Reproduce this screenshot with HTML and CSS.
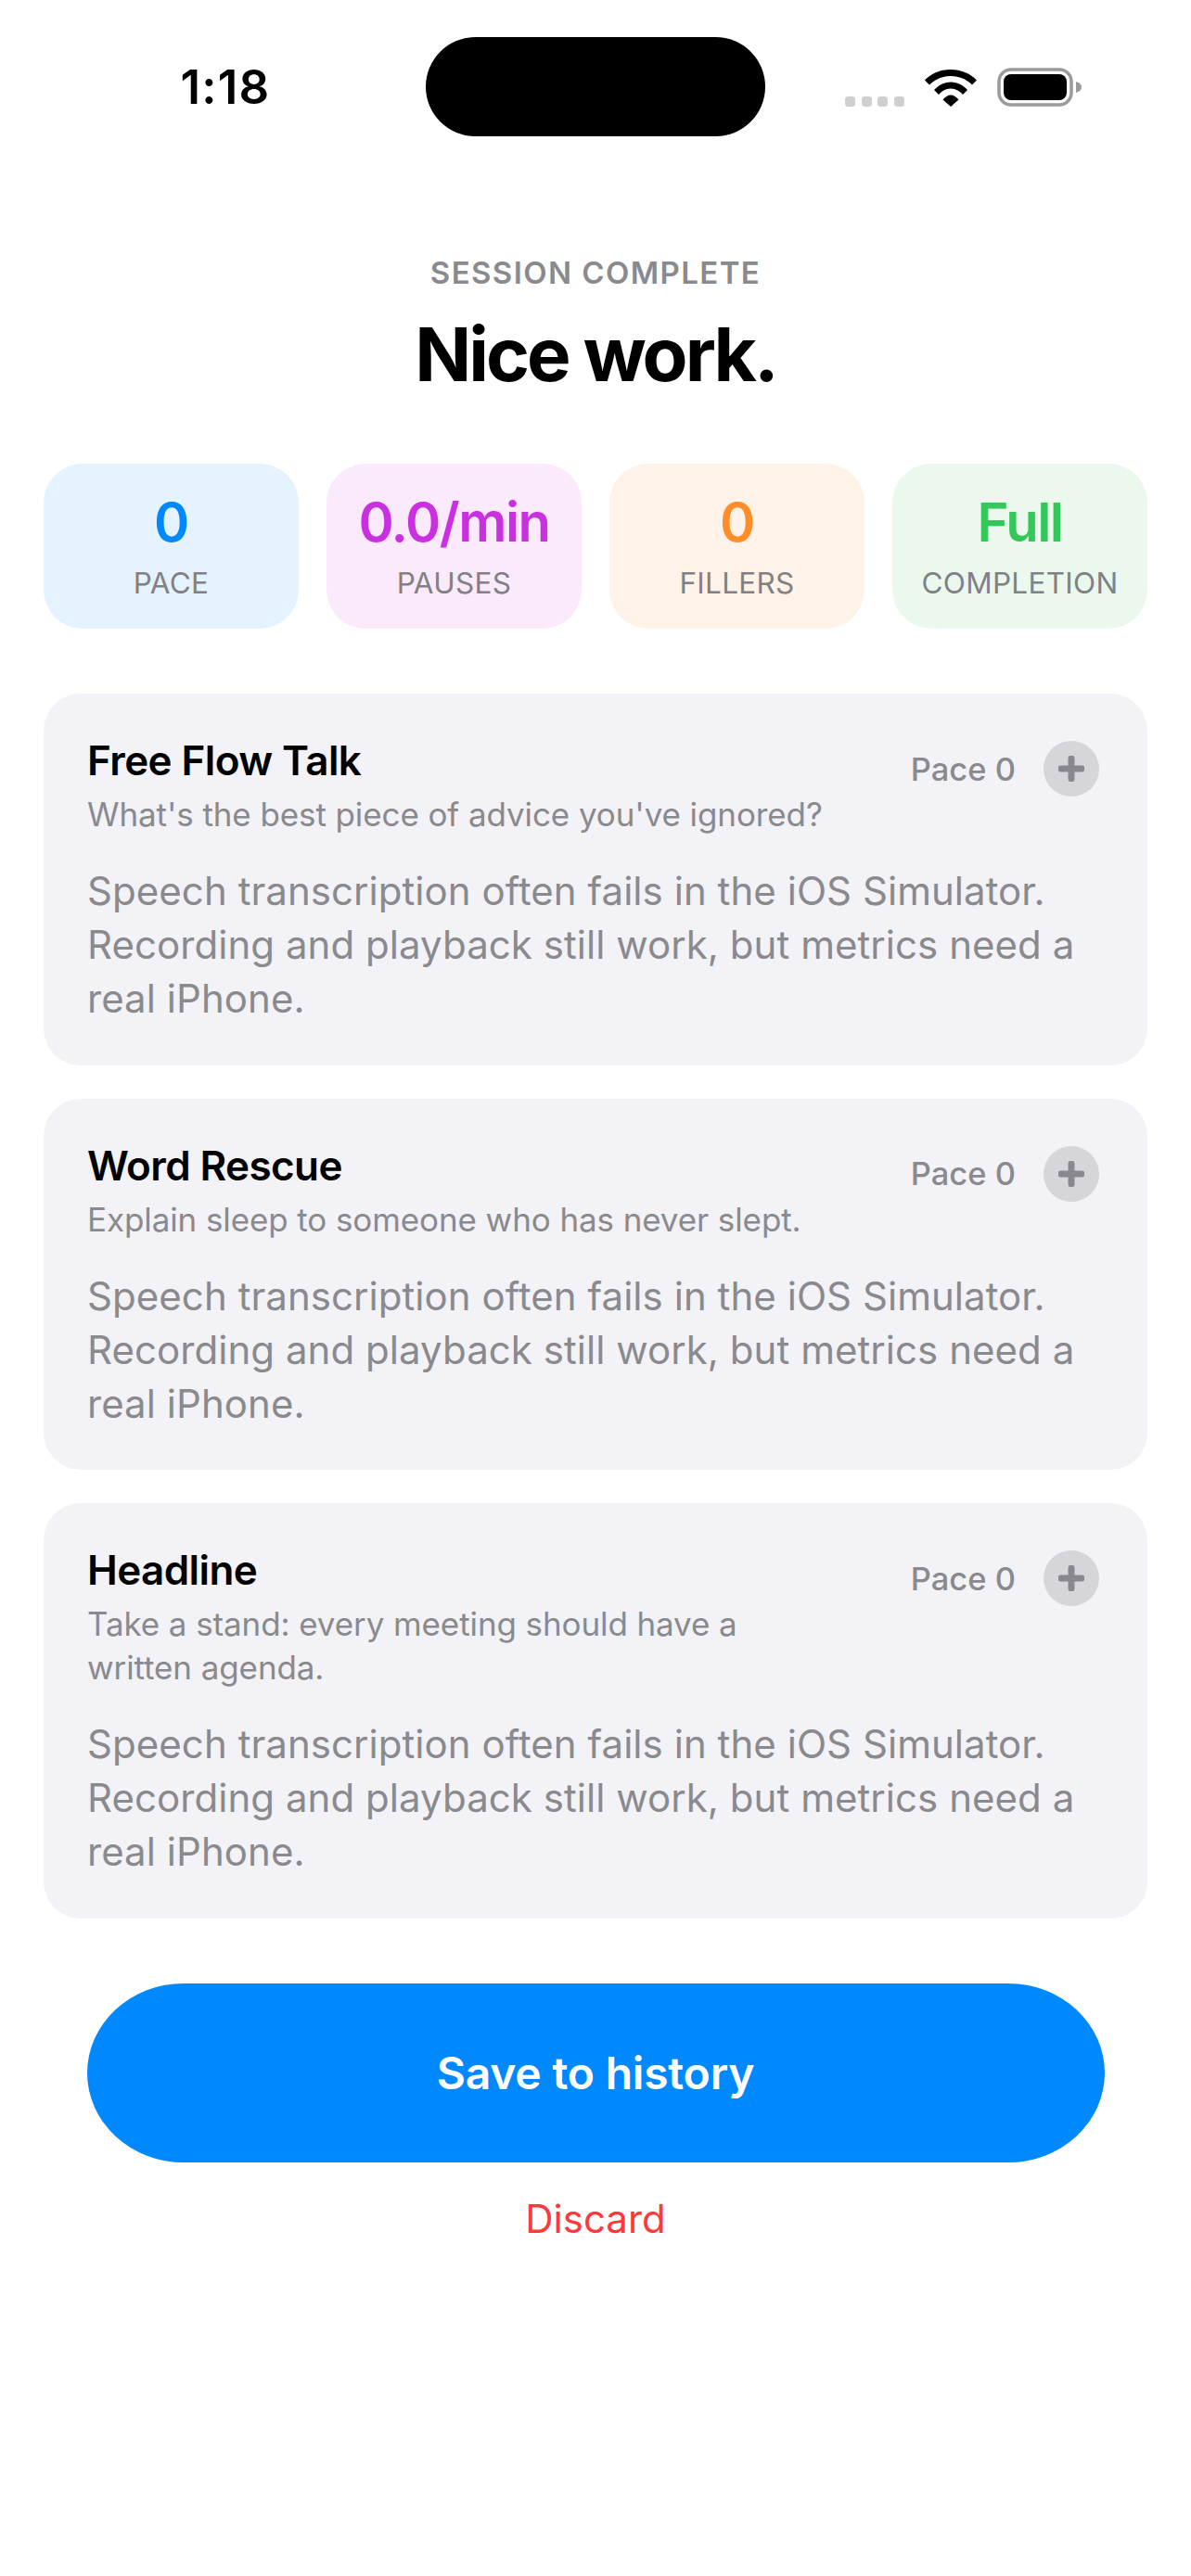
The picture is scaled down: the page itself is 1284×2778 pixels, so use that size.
FILE: index.html
```html
<!DOCTYPE html>
<html lang="en">
<head>
    <meta charset="UTF-8">
    <title>Session Complete</title>
    <link rel="stylesheet" href="styles.css">
</head>
<body>
    <div class="screen">
        <!-- Status bar -->
        <div class="status-bar">
            <div class="status-left"><span class="time">1:18</span></div>
            <div class="island"></div>
            <div class="status-right">
                <div class="signal-dots"><span></span><span></span><span></span><span></span></div>
                <svg class="wifi" width="56" height="41" viewBox="0 0 56 41">
                    <path d="M0 12.5C7.5 5 17 1 28 1S48.5 5 56 12.5L51 17.5C45 11.5 37 8 28 8S11 11.5 5 17.5Z"/>
                    <path d="M10 23C14 18.5 20.5 14.5 28 14.5S42 18.5 46 23L41 28C38 24.5 33.5 21.5 28 21.5S18 24.5 15 28Z"/>
                    <path d="M19.5 33.5C22 30.5 25 28.5 28 28.5S34 30.5 36.5 33.5L28 41Z"/>
                </svg>
                <svg class="battery" width="91" height="42" viewBox="0 0 91 42">
                    <rect x="2" y="2" width="78" height="38" rx="13" fill="none" stroke="#9b9b9b" stroke-width="3.5"/>
                    <rect x="7" y="7" width="68" height="28" rx="8"/>
                    <path d="M85 15C88.500 16 91 18 91 21S88.500 26 85 27Z" fill="#9b9b9b"/>
                </svg>
            </div>
        </div>

        <!-- Heading -->
        <div class="header">
            <div class="kicker">SESSION COMPLETE</div>
            <h1>Nice work.</h1>
        </div>

        <!-- Stat tiles -->
        <div class="stats">
            <div class="stat stat-blue">
                <div class="stat-value">0</div>
                <div class="stat-label">PACE</div>
            </div>
            <div class="stat stat-purple">
                <div class="stat-value">0.0/min</div>
                <div class="stat-label">PAUSES</div>
            </div>
            <div class="stat stat-orange">
                <div class="stat-value">0</div>
                <div class="stat-label">FILLERS</div>
            </div>
            <div class="stat stat-green">
                <div class="stat-value">Full</div>
                <div class="stat-label">COMPLETION</div>
            </div>
        </div>

        <!-- Drill results -->
        <div class="results">
            <div class="result">
                <div class="result-head">
                    <div class="result-titles">
                        <div class="result-title">Free Flow Talk</div>
                        <div class="result-prompt">What's the best piece of advice you've ignored?</div>
                    </div>
                    <div class="result-meta">
                        <span class="pace">Pace 0</span>
                        <span class="plus"><svg width="28" height="28" viewBox="0 0 28 28"><path d="M14 3V25M3 14H25"/></svg></span>
                    </div>
                </div>
                <p class="result-note">Speech transcription often fails in the iOS Simulator. Recording and playback still work, but metrics need a real iPhone.</p>
            </div>
            <div class="result">
                <div class="result-head">
                    <div class="result-titles">
                        <div class="result-title">Word Rescue</div>
                        <div class="result-prompt">Explain sleep to someone who has never slept.</div>
                    </div>
                    <div class="result-meta">
                        <span class="pace">Pace 0</span>
                        <span class="plus"><svg width="28" height="28" viewBox="0 0 28 28"><path d="M14 3V25M3 14H25"/></svg></span>
                    </div>
                </div>
                <p class="result-note">Speech transcription often fails in the iOS Simulator. Recording and playback still work, but metrics need a real iPhone.</p>
            </div>
            <div class="result">
                <div class="result-head">
                    <div class="result-titles">
                        <div class="result-title">Headline</div>
                        <div class="result-prompt">Take a stand: every meeting should have a written agenda.</div>
                    </div>
                    <div class="result-meta">
                        <span class="pace">Pace 0</span>
                        <span class="plus"><svg width="28" height="28" viewBox="0 0 28 28"><path d="M14 3V25M3 14H25"/></svg></span>
                    </div>
                </div>
                <p class="result-note">Speech transcription often fails in the iOS Simulator. Recording and playback still work, but metrics need a real iPhone.</p>
            </div>
        </div>

        <!-- Actions -->
        <button class="save">Save to history</button>
        <button class="discard">Discard</button>
    </div>
</body>
</html>
```

FILE: styles.css
```css
body {
    font-family: Inter, "Noto Sans", sans-serif;
    background-color: #fff;
    margin: 0;
    padding: 0;
    color: #000;
}
.screen {
    width: 1284px;
    height: 2778px;
    overflow: hidden;
}
.status-bar {
    display: flex;
    align-items: center;
    padding-top: 40px;
}
.status-left {
    width: 459px;
    padding-left: 27px;
    box-sizing: border-box;
    text-align: center;
}
.time {
    font-size: 51px;
    font-weight: 600;
    letter-spacing: 1.2px;
}
.island {
    width: 366px;
    height: 107px;
    background-color: #000;
    border-radius: 54px;
}
.status-right {
    display: flex;
    align-items: flex-end;
    gap: 22px;
    padding-left: 86px;
}
.signal-dots {
    display: flex;
    gap: 6.5px;
}
.signal-dots span {
    width: 11px;
    height: 11px;
    border-radius: 3.5px;
    background-color: #cfcfcf;
}
.wifi,
.battery {
    display: block;
}
.header {
    text-align: center;
    padding-top: 126px;
}
.kicker {
    font-size: 33px;
    line-height: 42px;
    font-weight: 600;
    letter-spacing: 1.4px;
    color: #8a8a8e;
}
h1 {
    font-size: 80px;
    line-height: 96px;
    font-weight: 700;
    letter-spacing: -3px;
    margin: 19px 0 0;
}
.stats {
    display: flex;
    gap: 30px;
    padding: 0 47px;
    margin-top: 70px;
}
.stat {
    flex: 1;
    height: 178px;
    border-radius: 42px;
    text-align: center;
    box-sizing: border-box;
    padding-top: 28px;
}
.stat-value {
    font-size: 58px;
    line-height: 70px;
    font-weight: 600;
    letter-spacing: -1.5px;
}
.stat-label {
    font-size: 31.5px;
    line-height: 40px;
    letter-spacing: 0.3px;
    margin-top: 11px;
    color: #808085;
}
.stat-blue { background-color: #e5f2ff; }
.stat-blue .stat-value { color: #0088ff; }
.stat-purple { background-color: #faeafc; }
.stat-purple .stat-value { color: #cb30e0; }
.stat-orange { background-color: #fff3e9; }
.stat-orange .stat-value { color: #ff8d28; }
.stat-green { background-color: #ebf8ee; }
.stat-green .stat-value { color: #34c759; }
.results {
    display: flex;
    flex-direction: column;
    gap: 36px;
    padding: 0 47px;
    margin-top: 70px;
}
.result {
    background-color: #f2f2f7;
    border-radius: 40px;
    padding: 45px 52px 42.67px 47px;
}
.result-head {
    display: flex;
    align-items: flex-start;
    justify-content: space-between;
}
.result-titles {
    max-width: 810px;
}
.result-title {
    font-size: 44px;
    line-height: 54px;
    font-weight: 600;
    letter-spacing: -0.6px;
}
.result-prompt {
    font-size: 35px;
    line-height: 47px;
    letter-spacing: -0.1px;
    margin-top: 8px;
    color: #8a8a8e;
}
.result-meta {
    display: flex;
    align-items: center;
    gap: 30px;
    padding-top: 6px;
}
.pace {
    font-size: 34.5px;
    font-weight: 500;
    color: #8a8a8e;
}
.plus {
    display: flex;
    align-items: center;
    justify-content: center;
    width: 60px;
    height: 60px;
    border-radius: 50%;
    background-color: #d5d5da;
}
.plus svg {
    fill: none;
    stroke: #88888d;
    stroke-width: 7;
    stroke-linecap: round;
}
.result-note {
    font-size: 42px;
    line-height: 58px;
    letter-spacing: 0.05px;
    margin: 30px 0 0;
    color: #8a8a8e;
}
button {
    display: block;
    font-family: inherit;
    border: none;
    padding: 0;
    background: none;
    cursor: pointer;
}
.save {
    width: 1097px;
    height: 193px;
    margin: 70px auto 0;
    border-radius: 104px / 96.5px;
    background-color: #0088ff;
    color: #fff;
    font-size: 48px;
    font-weight: 600;
    letter-spacing: -0.2px;
}
.discard {
    margin: 34px auto 0;
    font-size: 42px;
    line-height: 54px;
    color: #ff383c;
}
```
